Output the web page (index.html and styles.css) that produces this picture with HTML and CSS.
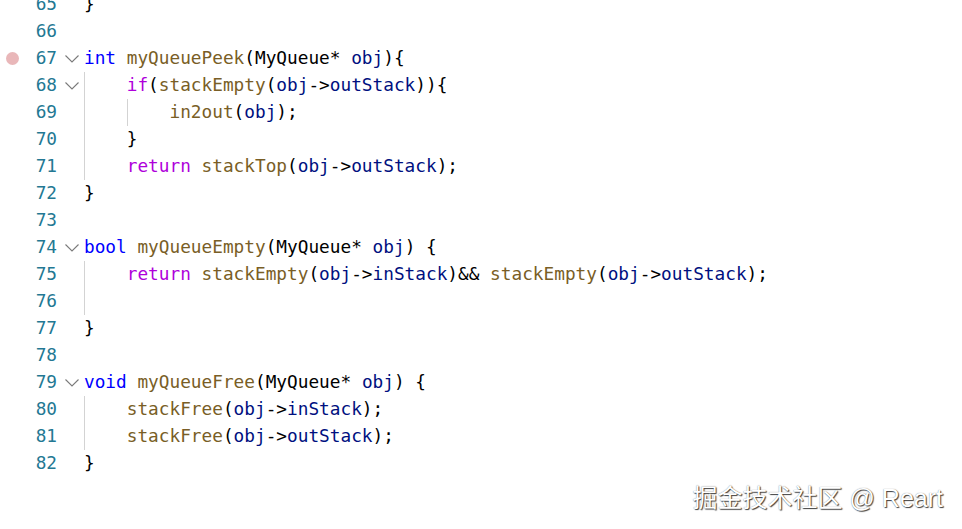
FILE: index.html
```html
<!DOCTYPE html>
<html>
<head>
<meta charset="utf-8">
<link rel="stylesheet" href="styles.css">
</head>
<body>
<div class="editor">
  <div class="line"><span class="glyph"></span><span class="num">65</span><span class="fold"></span><span class="code"><span class="p">}</span></span></div>
  <div class="line"><span class="glyph"></span><span class="num">66</span><span class="fold"></span><span class="code"></span></div>
  <div class="line"><span class="glyph"><i class="bp"></i></span><span class="num">67</span><span class="fold"><svg viewBox="0 0 14 8" class="chev"><path d="M0.5 0.5 L7 7 L13.5 0.5"/></svg></span><span class="code"><span class="k">int</span> <span class="f">myQueuePeek</span><span class="p">(MyQueue* </span><span class="v">obj</span><span class="p">){</span></span></div>
  <div class="line"><span class="glyph"></span><span class="num">68</span><span class="fold"><svg viewBox="0 0 14 8" class="chev"><path d="M0.5 0.5 L7 7 L13.5 0.5"/></svg></span><span class="code"><span class="ind"></span><span class="c">if</span><span class="p">(</span><span class="f">stackEmpty</span><span class="p">(</span><span class="v">obj</span><span class="p">-&gt;</span><span class="v">outStack</span><span class="p">)){</span></span></div>
  <div class="line"><span class="glyph"></span><span class="num">69</span><span class="fold"></span><span class="code"><span class="ind"></span><span class="ind"></span><span class="f">in2out</span><span class="p">(</span><span class="v">obj</span><span class="p">);</span></span></div>
  <div class="line"><span class="glyph"></span><span class="num">70</span><span class="fold"></span><span class="code"><span class="ind"></span><span class="p">}</span></span></div>
  <div class="line"><span class="glyph"></span><span class="num">71</span><span class="fold"></span><span class="code"><span class="ind"></span><span class="c">return</span> <span class="f">stackTop</span><span class="p">(</span><span class="v">obj</span><span class="p">-&gt;</span><span class="v">outStack</span><span class="p">);</span></span></div>
  <div class="line"><span class="glyph"></span><span class="num">72</span><span class="fold"></span><span class="code"><span class="p">}</span></span></div>
  <div class="line"><span class="glyph"></span><span class="num">73</span><span class="fold"></span><span class="code"></span></div>
  <div class="line"><span class="glyph"></span><span class="num">74</span><span class="fold"><svg viewBox="0 0 14 8" class="chev"><path d="M0.5 0.5 L7 7 L13.5 0.5"/></svg></span><span class="code"><span class="k">bool</span> <span class="f">myQueueEmpty</span><span class="p">(MyQueue* </span><span class="v">obj</span><span class="p">) {</span></span></div>
  <div class="line"><span class="glyph"></span><span class="num">75</span><span class="fold"></span><span class="code"><span class="ind"></span><span class="c">return</span> <span class="f">stackEmpty</span><span class="p">(</span><span class="v">obj</span><span class="p">-&gt;</span><span class="v">inStack</span><span class="p">)&amp;&amp; </span><span class="f">stackEmpty</span><span class="p">(</span><span class="v">obj</span><span class="p">-&gt;</span><span class="v">outStack</span><span class="p">);</span></span></div>
  <div class="line"><span class="glyph"></span><span class="num">76</span><span class="fold"></span><span class="code"><span class="ind"></span></span></div>
  <div class="line"><span class="glyph"></span><span class="num">77</span><span class="fold"></span><span class="code"><span class="p">}</span></span></div>
  <div class="line"><span class="glyph"></span><span class="num">78</span><span class="fold"></span><span class="code"></span></div>
  <div class="line"><span class="glyph"></span><span class="num">79</span><span class="fold"><svg viewBox="0 0 14 8" class="chev"><path d="M0.5 0.5 L7 7 L13.5 0.5"/></svg></span><span class="code"><span class="k">void</span> <span class="f">myQueueFree</span><span class="p">(MyQueue* </span><span class="v">obj</span><span class="p">) {</span></span></div>
  <div class="line"><span class="glyph"></span><span class="num">80</span><span class="fold"></span><span class="code"><span class="ind"></span><span class="f">stackFree</span><span class="p">(</span><span class="v">obj</span><span class="p">-&gt;</span><span class="v">inStack</span><span class="p">);</span></span></div>
  <div class="line"><span class="glyph"></span><span class="num">81</span><span class="fold"></span><span class="code"><span class="ind"></span><span class="f">stackFree</span><span class="p">(</span><span class="v">obj</span><span class="p">-&gt;</span><span class="v">outStack</span><span class="p">);</span></span></div>
  <div class="line"><span class="glyph"></span><span class="num">82</span><span class="fold"></span><span class="code"><span class="p">}</span></span></div>
</div>
<div class="watermark">掘金技术社区 @ Reart</div>
</body>
</html>
```
FILE: styles.css
```css
html, body {
  margin: 0;
  padding: 0;
  background: #ffffff;
  overflow: hidden;
  width: 962px;
  height: 529px;
}
.editor {
  margin-top: -9px;
  font-family: "DejaVu Sans Mono", "Liberation Mono", monospace;
  font-size: 17.75px;
}
.line {
  display: flex;
  height: 27px;
  line-height: 27px;
  white-space: pre;
}
.glyph {
  width: 24px;
  flex: none;
  display: flex;
  align-items: center;
  justify-content: center;
}
.bp {
  width: 13px;
  height: 13px;
  border-radius: 50%;
  background: #e9b7b9;
}
.num {
  width: 33px;
  flex: none;
  text-align: right;
  color: #237893;
}
.fold {
  width: 27px;
  flex: none;
  display: flex;
  align-items: center;
}
.chev {
  width: 14px;
  height: 8px;
  margin-left: 8px;
  margin-top: 1px;
  fill: none;
  stroke: #7a7a7a;
  stroke-width: 1.1;
}
.code {
  color: #000000;
}
.ind {
  display: inline-block;
  width: 4ch;
  height: 27px;
  vertical-align: top;
  box-shadow: inset 1px 0 0 #d3d3d3;
}
.k { color: #0000ff; }
.c { color: #af00db; }
.f { color: #795e26; }
.v { color: #001080; }
.p { color: #000000; }
.watermark {
  position: absolute;
  right: 19px;
  bottom: 16px;
  font-family: "Liberation Sans", "Noto Sans CJK SC", sans-serif;
  font-size: 25px;
  line-height: 30px;
  color: #ffffff;
  text-shadow: 1px 1px 1px rgba(0, 0, 0, 0.75), 0 0 1px rgba(0, 0, 0, 0.5);
}
```
